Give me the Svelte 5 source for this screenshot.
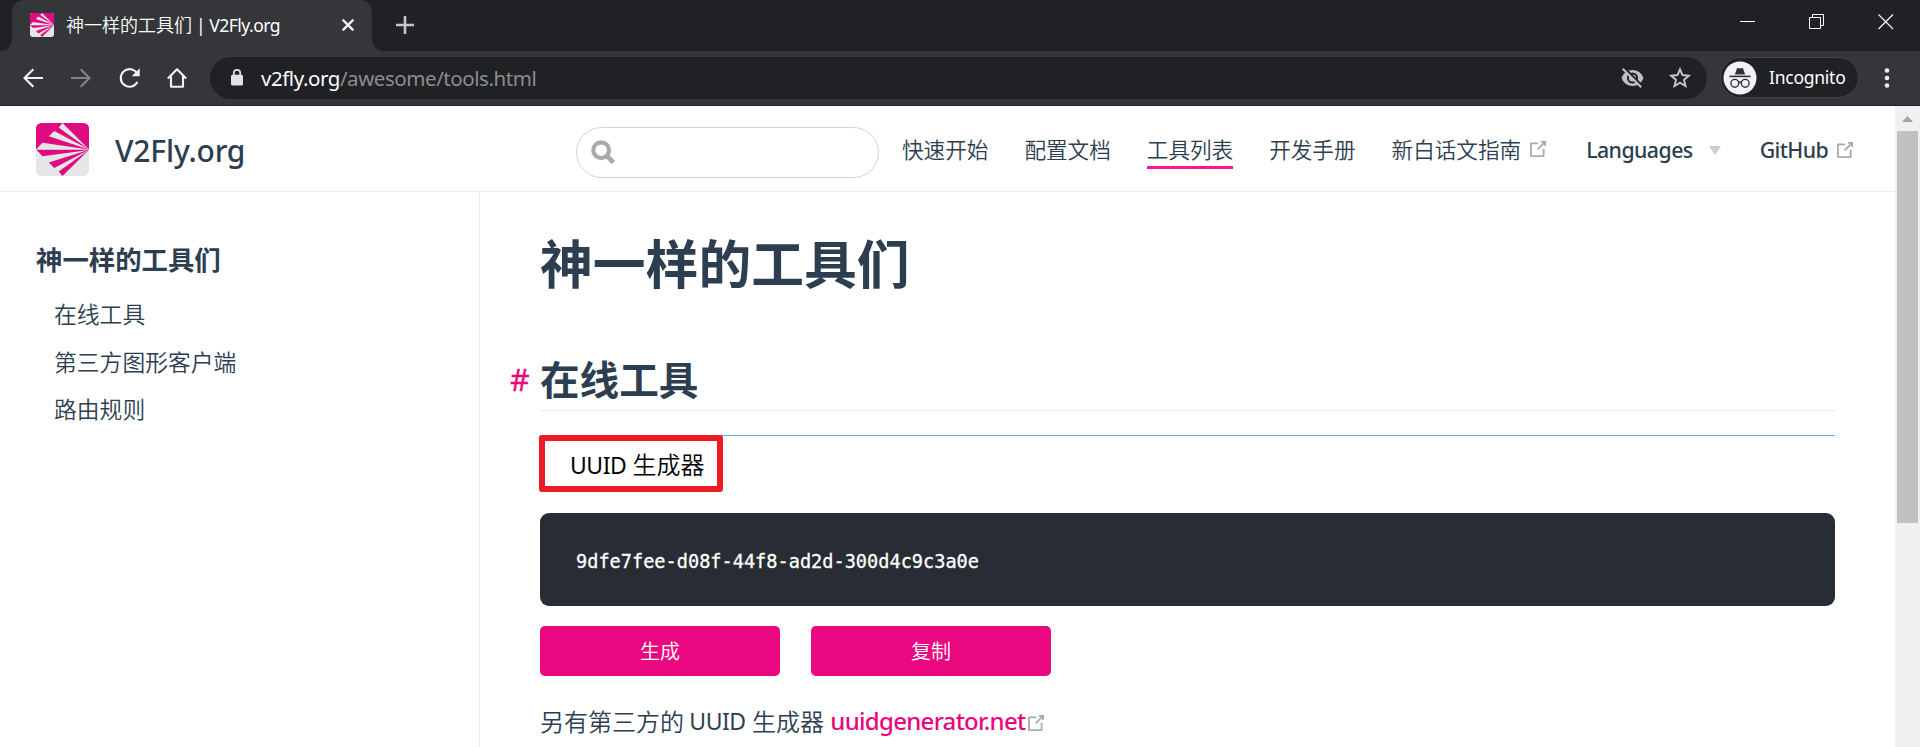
<script>
  const nav = [
    { label: '快速开始' },
    { label: '配置文档' },
    { label: '工具列表', active: true },
    { label: '开发手册' },
    { label: '新白话文指南', outbound: true }
  ];
  const sidebar = ['在线工具', '第三方图形客户端', '路由规则'];
  const uuid = '9dfe7fee-d08f-44f8-ad2d-300d4c9c3a0e';
</script>

{#snippet logo(size)}
  <svg class="logo" width={size} height={size} viewBox="0 0 53 53">
    <clipPath id="logo-clip-{size}"><rect width="53" height="53" rx="5.5" /></clipPath>
    <g clip-path="url(#logo-clip-{size})">
      <rect width="53" height="53" fill="#e6e6e6" />
      <rect width="53" height="26.5" fill="#e00b83" />
      <path fill="#e6e6e6" d="M53 26.5 22.7 4.5 26.5 0ZM53 26.5 12.8 13.3 18.3 8ZM53 26.5H0L6.5 19.7Z" />
      <path fill="#e00b83" d="M53 26.7 22.7 48.5 26.5 53ZM53 26.7 12.8 39.5 18.3 45ZM53 27H0.5L6.5 33.2Z" />
    </g>
  </svg>
{/snippet}

{#snippet outbound()}
  <svg class="outbound" width="16" height="16" viewBox="14.8 14.9 70.4 70.4">
    <path fill="#aaa" d="M18.8,85.1h56l0,0c2.2,0,4-1.8,4-4v-32h-8v28h-48v-48h28v-8h-32l0,0c-2.2,0-4,1.8-4,4v56C14.8,83.3,16.6,85.1,18.8,85.1z" />
    <polygon fill="#aaa" points="45.7,48.7 51.3,54.3 77.2,28.5 77.2,37.2 85.2,37.2 85.2,14.9 62.8,14.9 62.8,22.9 71.5,22.9" />
  </svg>
{/snippet}

<div class="window">
  <div class="tabstrip">
    <div class="lead"></div>
    <div class="tab">
      {@render logo(24)}
      <span class="tab-title">神一样的工具们 <span class="lat">| V2Fly.org</span></span>
      <svg class="tab-close" width="12" height="12" viewBox="0 0 12 12"><path d="M.6 .6 11.400 11.400M11.400 .6 .6 11.400" stroke="#f4f4f5" stroke-width="2.300" /></svg>
    </div>
    <div class="rest">
      <svg class="plus" width="18" height="18" viewBox="0 0 18 18"><path d="M9 0V18M0 9H18" stroke="#c4c5c7" stroke-width="2.600" /></svg>
      <div class="controls">
        <svg width="16" height="16" viewBox="0 0 16 16"><path d="M0 7.5H15" stroke="#fff" /></svg>
        <svg width="16" height="16" viewBox="0 0 16 16"><path d="M.5 3.5H11.5V14.5H.5ZM3.5 3.5V.5H14.5V11.5H11.5" fill="none" stroke="#fff" /></svg>
        <svg width="16" height="16" viewBox="0 0 16 16"><path d="M.5 .5 15 15M15 .5 .5 15" stroke="#fff" stroke-width="1.1" /></svg>
      </div>
    </div>
  </div>

  <div class="toolbar">
    <div class="nav-buttons">
      <svg width="20" height="20" viewBox="0 0 20 20"><path d="M20 10H2M10.3 1.2 1.5 10l8.8 8.8" fill="none" stroke="#f1f2f3" stroke-width="2.1" /></svg>
      <svg width="20" height="20" viewBox="0 0 20 20"><path d="M0 10H18M9.7 1.2 18.5 10l-8.8 8.8" fill="none" stroke="#828387" stroke-width="2.1" /></svg>
      <svg width="21" height="20" viewBox="0 0 21 20"><path d="M18 5.2A8.8 8.8 0 1 0 18.4 14" fill="none" stroke="#f1f2f3" stroke-width="2.1" /><path d="M20.7 .3V8.2H12.8Z" fill="#f1f2f3" /></svg>
      <svg width="20" height="20" viewBox="0 0 20 20"><path d="M.8 10.4 10 1.3 19.2 10.4M4 8V18.8H16V8" fill="none" stroke="#f1f2f3" stroke-width="2.1" stroke-linejoin="round" /></svg>
    </div>
    <div class="omnibox">
      <svg class="lock" width="12" height="17" viewBox="0 0 12 17"><rect y="5.8" width="12" height="10.7" rx="1.5" fill="#e2e2e3" /><path d="M2.8 7V4a3.2 3.2 0 0 1 6.4 0V7" fill="none" stroke="#e2e2e3" stroke-width="1.7" /></svg>
      <span class="url"><b>v2fly.org</b>/awesome/tools.html</span>
      <svg class="eye" width="23" height="20" viewBox="0 0 23 20">
        <path d="M.5 10C2.6 4.7 6.5 2 11.500 2S20.400 4.700 22.500 10C20.400 15.300 16.500 18 11.500 18S2.600 15.300.5 10Z" fill="#c0c1c3" />
        <circle cx="11.500" cy="10" r="4.600" fill="none" stroke="#202124" stroke-width="2" />
        <path d="M3.600 .1 21.500 18" stroke="#202124" stroke-width="2.200" />
        <path d="M1.700 .8 20.200 19.300" stroke="#c0c1c3" stroke-width="2.100" />
      </svg>
      <svg class="star" width="22" height="21" viewBox="0 0 22 21"><path d="M11 2.300 13.500 8.100 19.800 8.700 15 12.800 16.500 19 11 15.700 5.500 19 7 12.800 2.200 8.700 8.500 8.100Z" fill="none" stroke="#c0c1c3" stroke-width="2" /></svg>
    </div>
    <div class="incognito">
      <svg width="34" height="34" viewBox="0 0 34 34">
        <circle cx="17" cy="17" r="16.500" fill="#f1f2f4" />
        <path d="M11.800 13.500 14 7.400Q14.300 6.800 15 7L17 7.500 19 7Q19.700 6.800 20 7.400L22.200 13.500Z" fill="#303136" />
        <path d="M6.500 15.400H27.500" stroke="#303136" stroke-width="1.600" />
        <g fill="none" stroke="#303136" stroke-width="1.400"><circle cx="11.800" cy="22.300" r="3.900" /><circle cx="22.200" cy="22.300" r="3.900" /><path d="M15.500 21.500Q17 20.600 18.500 21.500" /></g>
      </svg>
      <span>Incognito</span>
    </div>
    <svg class="dots" width="6" height="20" viewBox="0 0 6 20"><g fill="#f1f2f3"><circle cx="3" cy="2.500" r="2.300" /><circle cx="3" cy="10" r="2.300" /><circle cx="3" cy="17.500" r="2.300" /></g></svg>
  </div>

  <div class="viewport">
    <div class="page">
      <header>
        {@render logo(53)}
        <span class="site-name">V2Fly.org</span>
        <div class="search">
          <svg width="25" height="25" viewBox="0 0 25 25"><circle cx="10.200" cy="10.200" r="7.900" fill="none" stroke="#aaa" stroke-width="4.200" /><path d="M15.500 15.500 22.500 22.500" stroke="#aaa" stroke-width="4.600" /></svg>
        </div>
        <nav>
          {#each nav as item}
            <a class:active={item.active}>{item.label}{#if item.outbound}{@render outbound()}{/if}</a>
          {/each}
          <a class="lat languages">Languages<svg class="caret" width="12" height="9" viewBox="0 0 12 9"><path d="M0 0H12L6 9Z" fill="#ccc" /></svg></a>
          <a class="lat github">GitHub{@render outbound()}</a>
        </nav>
      </header>

      <div class="body">
        <aside>
          <p class="side-title">神一样的工具们</p>
          <ul>
            {#each sidebar as item}<li>{item}</li>{/each}
          </ul>
        </aside>

        <main>
          <h1>神一样的工具们</h1>
          <h2><span class="anchor">#</span>在线工具</h2>
          <section>
            <div class="label"><span class="latin">UUID</span> 生成器<div class="mark"></div></div>
            <pre>{uuid}</pre>
            <div class="buttons"><button>生成</button><button>复制</button></div>
            <p class="more">另有第三方的 <span class="latin">UUID</span> 生成器 <a class="lat">uuidgenerator.net</a>{@render outbound()}</p>
          </section>
        </main>
      </div>
    </div>

    <div class="scrollbar">
      <svg width="11" height="6" viewBox="0 0 11 6"><path d="M0 6 5.500 0 11 6Z" fill="#a3a3a3" /></svg>
      <div class="thumb"></div>
    </div>
  </div>
</div>

<style>
  :global(body) { margin: 0; overflow: hidden; }
  .window, .window * { box-sizing: border-box; }
  .window {
    width: 1920px; height: 747px; display: flex; flex-direction: column; overflow: hidden;
    background: #fff; color: #2c3e50; font-family: 'Noto Sans CJK SC', sans-serif;
  }
  svg { display: block; flex: none; }
  span, a { white-space: nowrap; }
  .lat { font-family: 'Noto Sans', sans-serif; }

  .tabstrip { height: 51px; flex: none; display: flex; background: #35363a; }
  .lead { width: 12px; background: #202124; border-bottom-right-radius: 12px; }
  .tab {
    width: 360px; display: flex; align-items: center; padding: 0 18px 1px 18px; color: #fff;
    background: #35363a; position: relative;
  }
  .tab::before, .tab::after {
    content: ''; position: absolute; top: 0; width: 12px; height: 12px;
  }
  .tab::before { left: 0; background: radial-gradient(circle at 100% 100%, transparent 11.5px, #202124 12px); }
  .tab::after { right: 0; background: radial-gradient(circle at 0 100%, transparent 11.5px, #202124 12px); }
  .tab-title { margin: 0 0 2px 12px; font-size: 18px; line-height: 24px; font-weight: 350; }
  .tab-title .lat { font-size: 17.500px; font-weight: 400; letter-spacing: -.5px; }
  .tab-close { margin-left: auto; }
  .rest {
    flex: 1; display: flex; justify-content: space-between; background: #202124;
    border-bottom-left-radius: 12px; padding: 16px 26px 0 24px;
  }
  .controls { display: flex; gap: 53px; margin-top: -2px; }

  .toolbar {
    height: 55px; flex: none; display: flex; align-items: center; padding: 0 30px 1px 23px;
    background: #35363a; border-bottom: 1px solid #202124;
  }
  .nav-buttons { display: flex; gap: 28px; width: 187px; }
  .nav-buttons svg:last-child { margin-left: -1px; }
  .omnibox {
    width: 1497px; height: 42px; border-radius: 21px; background: #202124;
    display: flex; align-items: center; padding: 0 16px 0 21px;
  }
  .url { margin-left: 18px; font: 400 20.500px/30px 'Noto Sans', sans-serif; letter-spacing: -.44px; color: #8b8c8e; }
  .url b { font-weight: 400; color: #fff; }
  .eye { margin-left: auto; }
  .star { margin-left: 25px; }
  .incognito {
    width: 139px; height: 41px; margin-left: 13px; border: 1px solid #424347; border-radius: 21px;
    background: #202124; display: flex; align-items: center; padding-left: 2px; color: #fff;
    font: 400 17.500px/26px 'Noto Sans', sans-serif; letter-spacing: -.25px;
  }
  .incognito span { margin: 0 0 1px 12px; }
  .dots { margin-left: auto; }

  .viewport { flex: 1; min-height: 0; display: flex; }
  .page { width: 1895px; display: flex; flex-direction: column; }
  header { height: 86px; flex: none; display: flex; align-items: center; border-bottom: 1px solid #eaecef; padding: 0 36px 0 36px; }
  header .logo { margin-top: 2px; }
  .site-name { margin-left: 26px; width: 461px; font: 500 30px/44px 'Noto Sans', sans-serif; padding-top: 4px; letter-spacing: -.15px; }
  .search { width: 303px; height: 51px; margin-top: 8px; border: 1px solid #cfd4db; border-radius: 26px; padding: 12px 14px; }
  nav { margin-left: 24px; display: flex; gap: 36px; font-size: 21.600px; line-height: 34px; }
  nav a { position: relative; left: -1px; display: flex; align-items: center; height: 40px; padding-top: 4px; font-weight: 350; border-bottom: 3px solid transparent; }
  nav a.active { border-color: #ff1493; }
  nav .outbound { margin: 0 1px 0 9px; }
  nav .lat { font-weight: 500; font-size: 21.300px; letter-spacing: -.55px; padding-top: 6px; }
  nav .languages { margin-left: 3px; }
  nav .github { margin-left: 3px; }
  .caret { margin-left: 16px; }

  .body { flex: 1; min-height: 0; display: flex; }
  aside { width: 480px; border-right: 1px solid #eaecef; padding: 47px 36px 0; }
  .side-title { margin: 0; font-size: 26.400px; line-height: 40px; font-weight: 700; }
  ul { list-style: none; margin: 11px 0 0; padding: 0 0 0 18px; font-size: 22.800px; font-weight: 350; }
  li { height: 47.500px; line-height: 47.500px; }

  main { width: 1355px; padding: 29px 0 0 60px; }
  h1 { margin: 0; font-size: 52.800px; line-height: 80px; font-weight: 700; }
  h2 { margin: 47px 0 0; height: 63px; font-size: 39.600px; line-height: 60px; font-weight: 700; border-bottom: 1px solid #eaecef; }
  .anchor { float: left; width: 30px; margin-left: -30px; font: 400 30.500px/62px 'Noto Sans', sans-serif; color: #e9077f; -webkit-text-stroke: .3px #e9077f; }
  section { margin-top: 24px; border-top: 1px solid #5fb0e8; }
  .label { height: 57px; line-height: 55px; padding-left: 30px; font-size: 24px; font-weight: 350; color: #000; position: relative; }
  .latin { font-family: 'Noto Sans', sans-serif; font-weight: 400; font-size: 23px; letter-spacing: -.5px; line-height: 1; margin-right: 1px; }
  .mark { position: absolute; left: -1px; top: -1px; width: 184px; height: 57px; border: 6px solid #ed1c24; border-radius: 3px; }
  pre {
    margin: 20px 0 0; height: 93px; border-radius: 9px; background: #282c34; color: #fff;
    padding: 37px 36px; font: 400 18.600px/24px 'DejaVu Sans Mono', monospace; -webkit-text-stroke: .3px #fff;
  }
  .buttons { display: flex; gap: 31px; margin-top: 20px; }
  button {
    width: 240px; height: 50px; border: 0; border-radius: 5px; background: #ea0880; color: #fff;
    font: 350 20px/50px 'Noto Sans CJK SC', sans-serif; padding: 0;
  }
  .more { margin: 25px 0 0; height: 40px; font-size: 24px; line-height: 40px; font-weight: 350; display: flex; align-items: center; white-space: pre; }
  .more .lat { color: #e9077f; font-weight: 500; letter-spacing: -.7px; margin-left: 1px; }
  .more .outbound { margin: 3px 0 0 3px; }

  .scrollbar { width: 25px; background: #f0f0f0; display: flex; flex-direction: column; align-items: center; padding-top: 10px; }
  .thumb { width: 21px; height: 392px; margin-top: 9px; background: #c1c1c1; }
</style>
